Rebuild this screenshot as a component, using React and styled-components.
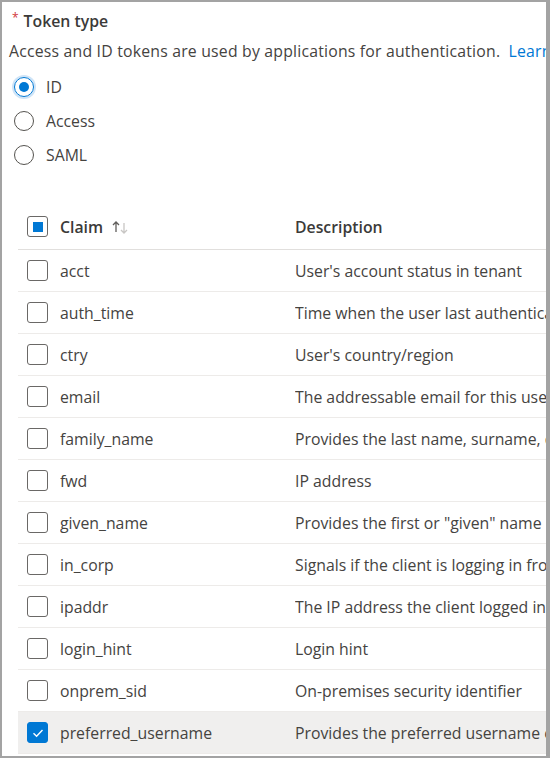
import styled, { createGlobalStyle } from 'styled-components';

const GlobalStyle = createGlobalStyle`
  html, body {
    margin: 0;
    padding: 0;
    background: #ffffff;
  }
  * {
    box-sizing: border-box;
  }
`;

const claims = [
  { name: 'acct', desc: "User's account status in tenant" },
  { name: 'auth_time', desc: 'Time when the user last authenticated; See OpenID Connect spec' },
  { name: 'ctry', desc: "User's country/region" },
  { name: 'email', desc: 'The addressable email for this user, if the user has one' },
  { name: 'family_name', desc: 'Provides the last name, surname, or family name of the user' },
  { name: 'fwd', desc: 'IP address' },
  { name: 'given_name', desc: 'Provides the first or "given" name of the user' },
  { name: 'in_corp', desc: 'Signals if the client is logging in from the corporate network' },
  { name: 'ipaddr', desc: 'The IP address the client logged in from' },
  { name: 'login_hint', desc: 'Login hint' },
  { name: 'onprem_sid', desc: 'On-premises security identifier' },
  { name: 'preferred_username', desc: 'Provides the preferred username claim', checked: true },
];

const tokenTypes = [
  { label: 'ID', selected: true },
  { label: 'Access' },
  { label: 'SAML' },
];

const App = () => {
  return (
    <>
      <GlobalStyle />
      <StFrame>
        <StTitle>
          <StRequired>*</StRequired>
          Token type
        </StTitle>
        <StHelp>
          Access and ID tokens are used by applications for authentication. <StLink>Learn more</StLink>
        </StHelp>
        <StRadioGroup>
          {tokenTypes.map((t) => (
            <StRadioRow key={t.label}>
              <StRadio selected={t.selected} />
              {t.label}
            </StRadioRow>
          ))}
        </StRadioGroup>
        <StTable>
          <StHeaderRow>
            <StCheckCell>
              <StCheckbox>
                <StPartial />
              </StCheckbox>
            </StCheckCell>
            <StHeaderText>
              Claim
              <StSort>
                <svg width="18" height="16" viewBox="0 0 18 16">
                  <path d="M5 3 V13 M2 6 L5 3 L8 6" fill="none" stroke="#605e5c" strokeWidth="1.3" />
                  <path d="M13 4 V14 M10 11 L13 14 L16 11" fill="none" stroke="#c8c6c4" strokeWidth="1.3" />
                </svg>
              </StSort>
            </StHeaderText>
            <StHeaderText>Description</StHeaderText>
          </StHeaderRow>
          {claims.map((c) => (
            <StRow key={c.name} selected={c.checked}>
              <StCheckCell>
                <StCheckbox checked={c.checked}>
                  {c.checked && (
                    <svg width="14" height="14" viewBox="0 0 14 14">
                      <path d="M2.5 7.2 L5.6 10.2 L11.5 4" fill="none" stroke="#ffffff" strokeWidth="1.4" />
                    </svg>
                  )}
                </StCheckbox>
              </StCheckCell>
              <StCell>{c.name}</StCell>
              <StCell>{c.desc}</StCell>
            </StRow>
          ))}
        </StTable>
      </StFrame>
    </>
  );
};

export default App;

const StFrame = styled.div`
  width: 550px;
  height: 758px;
  border: 2px solid #a3a3a3;
  border-right-width: 4px;
  overflow: hidden;
  padding: 8px 0 0 7px;
  font-family: 'Open Sans', 'Noto Sans', sans-serif;
  font-size: 15.8px;
  color: #45433f;
  background: #ffffff;
`;

const StTitle = styled.div`
  line-height: 22px;
  font-weight: 600;
  white-space: nowrap;
  display: flex;
  align-items: flex-start;
  color: #3b3a39;
`;

const StRequired = styled.span`
  color: #d13438;
  font-weight: 400;
  font-size: 12px;
  line-height: 16px;
  margin: 0 5px 0 3px;
`;

const StHelp = styled.div`
  margin-top: 8px;
  line-height: 22px;
  white-space: nowrap;
  letter-spacing: 0.2px;
`;

const StLink = styled.span`
  color: #0078d4;
  margin-left: 4px;
`;

const StRadioGroup = styled.div`
  margin-top: 8px;
  display: flex;
  flex-direction: column;
`;

const StRadioRow = styled.div`
  display: flex;
  align-items: center;
  gap: 12px;
  height: 34px;
  padding-left: 5px;
`;

const StRadio = styled.span`
  width: 20px;
  height: 20px;
  border-radius: 50%;
  border: 1.6px solid ${(p) => (p.selected ? '#0078d4' : '#55534f')};
  display: flex;
  align-items: center;
  justify-content: center;
  box-shadow: ${(p) => (p.selected ? '0 0 0 2px #cfe4f7' : 'none')};
  &::after {
    content: '';
    width: 10px;
    height: 10px;
    border-radius: 50%;
    background: ${(p) => (p.selected ? '#0078d4' : 'transparent')};
  }
`;

const StTable = styled.div`
  margin-top: 32px;
  margin-left: 9px;
  width: 640px;
`;

const StGridRow = styled.div`
  display: grid;
  grid-template-columns: 42px 235px 1fr;
  align-items: center;
  border-bottom: 1px solid #edebe9;
  white-space: nowrap;
`;

const StHeaderRow = styled(StGridRow)`
  height: 46px;
  border-bottom-color: #e1dfdd;
`;

const StRow = styled(StGridRow)`
  height: 42px;
  background: ${(p) => (p.selected ? '#f0efee' : 'transparent')};
`;

const StCheckCell = styled.div`
  padding-left: 9px;
  display: flex;
  align-items: center;
`;

const StCheckbox = styled.span`
  width: 21px;
  height: 21px;
  border-radius: 3px;
  border: 1.6px solid ${(p) => (p.checked ? '#0078d4' : '#6a6866')};
  background: ${(p) => (p.checked ? '#0078d4' : '#ffffff')};
  display: flex;
  align-items: center;
  justify-content: center;
`;

const StPartial = styled.span`
  width: 10px;
  height: 10px;
  background: #0078d4;
`;

const StHeaderText = styled.div`
  font-weight: 600;
  display: flex;
  align-items: center;
  color: #3b3a39;
`;

const StSort = styled.span`
  margin-left: 8px;
  display: flex;
  align-items: center;
`;

const StCell = styled.div`
  overflow: hidden;
`;
